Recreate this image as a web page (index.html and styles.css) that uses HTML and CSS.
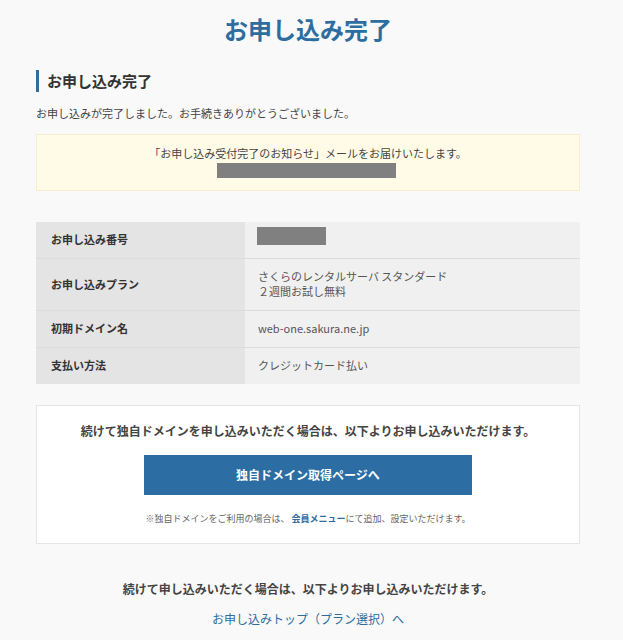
FILE: index.html
```html
<!DOCTYPE html>
<html lang="ja">
<head>
<meta charset="UTF-8">
<meta name="viewport" content="width=device-width, initial-scale=1.0">
<title>お申し込み完了</title>
<link rel="stylesheet" href="styles.css">
</head>
<body>
  <div class="page">
    <h1 class="page-title">お申し込み完了</h1>

    <h2 class="section-title">お申し込み完了</h2>
    <p class="lead">お申し込みが完了しました。お手続きありがとうございました。</p>

    <div class="notice">
      <p>「お申し込み受付完了のお知らせ」メールをお届けいたします。</p>
      <div class="masked masked-mail"></div>
    </div>

    <table class="summary">
      <tr>
        <th>お申し込み番号</th>
        <td class="masked-cell"><div class="masked masked-no"></div></td>
      </tr>
      <tr>
        <th>お申し込みプラン</th>
        <td>さくらのレンタルサーバ スタンダード<br>２週間お試し無料</td>
      </tr>
      <tr>
        <th>初期ドメイン名</th>
        <td>web-one.sakura.ne.jp</td>
      </tr>
      <tr>
        <th>支払い方法</th>
        <td>クレジットカード払い</td>
      </tr>
    </table>

    <div class="domain-box">
      <p class="domain-text">続けて独自ドメインを申し込みいただく場合は、以下よりお申し込みいただけます。</p>
      <a href="#" class="btn">独自ドメイン取得ページへ</a>
      <p class="domain-note">※独自ドメインをご利用の場合は、 <a href="#">会員メニュー</a>にて追加、設定いただけます。</p>
    </div>

    <p class="next-text">続けて申し込みいただく場合は、以下よりお申し込みいただけます。</p>
    <p class="next-link"><a href="#">お申し込みトップ（プラン選択）へ</a></p>
  </div>
</body>
</html>
```

FILE: styles.css
```css
body {
  margin: 0;
  padding: 0;
  background: #f9f9f9;
  color: #444;
  font-family: "Noto Sans CJK JP", "Noto Sans", sans-serif;
  overflow: hidden;
}
.page {
  width: 544px;
  margin-left: 36px;
}

/* タイトル */
.page-title {
  margin: 0;
  padding-top: 17px;
  font-size: 24px;
  line-height: 24px;
  text-align: center;
  color: #2d6d9f;
}
.section-title {
  margin: 29px 0 0;
  height: 22px;
  line-height: 22px;
  border-left: 3px solid #2d6d9f;
  padding-left: 8px;
  font-size: 15px;
  color: #333;
}
.lead {
  margin: 13px 0 0;
  font-size: 11px;
  line-height: 16px;
}

/* お知らせ枠 */
.notice {
  margin-top: 13px;
  background: #fffbe6;
  border: 1px solid #f6efcf;
  padding: 10px 0 12px;
  text-align: center;
}
.notice p {
  margin: 0;
  font-size: 11px;
  line-height: 16px;
}
.masked {
  background: #808080;
}
.masked-mail {
  width: 179px;
  height: 15px;
  margin: 2px 0 0 180px;
}
.masked-no {
  width: 69px;
  height: 18px;
}

/* 申し込み内容 */
.summary {
  width: 100%;
  margin-top: 31px;
  border-collapse: collapse;
  font-size: 11px;
  line-height: 15px;
}
.summary tr + tr th,
.summary tr + tr td {
  border-top: 1px solid #dcdcdc;
}
.summary th {
  width: 179px;
  background: #e4e4e4;
  padding: 10px 15px 11px;
  text-align: left;
  color: #333;
}
.summary td {
  background: #f0f0f0;
  padding: 10px 13px 11px;
  color: #555;
}
.summary td.masked-cell {
  vertical-align: top;
  padding: 5px 12px 0;
}

/* 独自ドメイン枠 */
.domain-box {
  margin-top: 21px;
  background: #fff;
  border: 1px solid #e4e4e4;
  padding: 16px 0 17px;
  text-align: center;
}
.domain-text {
  margin: 0;
  font-size: 12px;
  line-height: 18px;
  font-weight: bold;
  color: #444;
}
.btn {
  display: block;
  width: 328px;
  height: 40px;
  line-height: 40px;
  margin: 15px auto 0;
  background: #2c6ea4;
  color: #fff;
  font-size: 12px;
  font-weight: bold;
  text-decoration: none;
}
.domain-note {
  margin: 17px 0 0;
  font-size: 9px;
  line-height: 14px;
  color: #666;
}
.domain-note a {
  color: #2d6d9f;
  font-weight: bold;
  text-decoration: none;
}

/* 下部リンク */
.next-text {
  margin: 36px 0 0;
  font-size: 12px;
  line-height: 18px;
  font-weight: bold;
  text-align: center;
  color: #444;
}
.next-link {
  margin: 12px 0 0;
  font-size: 12px;
  line-height: 18px;
  text-align: center;
}
.next-link a {
  color: #2d6d9f;
  text-decoration: none;
}
```
